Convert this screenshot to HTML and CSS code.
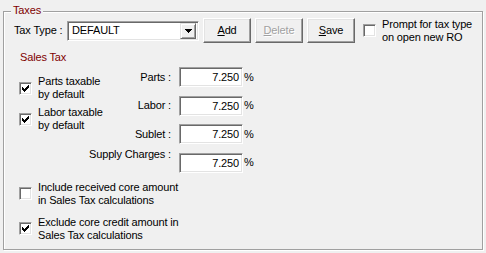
FILE: index.html
```html
<!DOCTYPE html>
<html>
<head>
<meta charset="utf-8">
<link rel="stylesheet" href="styles.css">
</head>
<body>
<fieldset class="group">
  <legend class="group-title">Taxes</legend>
  <div class="top-row">
    <span class="type-label">Tax Type :</span>
    <div class="combo">
      <span class="combo-text">DEFAULT</span>
      <span class="combo-btn"><svg width="7" height="4" viewBox="0 0 7 4" shape-rendering="crispEdges"><path d="M0 0h7v1h-7zM1 1h5v1h-5zM2 2h3v1h-3zM3 3h1v1h-1z" fill="#000"/></svg></span>
    </div>
    <button class="btn btn-first"><u>A</u>dd</button>
    <button class="btn disabled"><u>D</u>elete</button>
    <button class="btn"><u>S</u>ave</button>
    <span class="check prompt-check"></span>
    <span class="prompt-label">Prompt for tax type<br>on open new RO</span>
  </div>
  <div class="section-title">Sales Tax</div>
  <div class="middle">
    <div class="left-col">
      <div class="check-item">
        <span class="check checked"><svg width="7" height="7" viewBox="0 0 7 7" shape-rendering="crispEdges"><path d="M6 0h1v1h-1zM5 1h2v1h-2zM0 2h1v1h-1zM4 2h3v1h-3zM0 3h2v1h-2zM3 3h3v1h-3zM0 4h5v1h-5zM1 5h3v1h-3zM2 6h1v1h-1z" fill="#000"/></svg></span>
        <span class="check-text">Parts taxable<br>by default</span>
      </div>
      <div class="check-item">
        <span class="check checked"><svg width="7" height="7" viewBox="0 0 7 7" shape-rendering="crispEdges"><path d="M6 0h1v1h-1zM5 1h2v1h-2zM0 2h1v1h-1zM4 2h3v1h-3zM0 3h2v1h-2zM3 3h3v1h-3zM0 4h5v1h-5zM1 5h3v1h-3zM2 6h1v1h-1z" fill="#000"/></svg></span>
        <span class="check-text">Labor taxable<br>by default</span>
      </div>
    </div>
    <div class="rates">
      <span class="rate-label">Parts :</span>
      <span class="field">7.250</span>
      <span class="pct">%</span>
      <span class="rate-label">Labor :</span>
      <span class="field">7.250</span>
      <span class="pct">%</span>
      <span class="rate-label">Sublet :</span>
      <span class="field">7.250</span>
      <span class="pct">%</span>
      <span class="rate-label supply">Supply Charges :</span>
      <span class="field">7.250</span>
      <span class="pct">%</span>
    </div>
  </div>
  <div class="bottom">
    <div class="check-item">
      <span class="check"></span>
      <span class="check-text">Include received core amount<br>in Sales Tax calculations</span>
    </div>
    <div class="check-item">
      <span class="check checked"><svg width="7" height="7" viewBox="0 0 7 7" shape-rendering="crispEdges"><path d="M6 0h1v1h-1zM5 1h2v1h-2zM0 2h1v1h-1zM4 2h3v1h-3zM0 3h2v1h-2zM3 3h3v1h-3zM0 4h5v1h-5zM1 5h3v1h-3zM2 6h1v1h-1z" fill="#000"/></svg></span>
      <span class="check-text">Exclude core credit amount in<br>Sales Tax calculations</span>
    </div>
  </div>
</fieldset>
</body>
</html>
```
FILE: styles.css
```css
html, body {
  margin: 0;
  padding: 0;
}
body {
  width: 486px;
  height: 253px;
  background: #f0f0f0;
  font-family: "Liberation Sans", Arial, sans-serif;
  font-size: 11px;
  letter-spacing: -0.15px;
  line-height: 13px;
  color: #000;
  overflow: hidden;
}
.group {
  box-sizing: border-box;
  margin: 4px 0 0 3px;
  padding: 0;
  width: 480px;
  height: 246px;
  border: 1px solid #a0a0a0;
  box-shadow: 1px 1px 0 #fff, inset 1px 1px 0 #fff;
  min-width: 0;
}
.group-title {
  margin-left: 7px;
  padding: 0 2px 2px;
  line-height: 12px;
  color: #800000;
  background: #f0f0f0;
}
.top-row {
  display: flex;
  align-items: center;
  height: 25px;
  padding-left: 10px;
}
.type-label {
  width: 53px;
  white-space: nowrap;
}
.combo {
  box-sizing: border-box;
  width: 132px;
  height: 20px;
  display: flex;
  align-items: center;
  background: #fff;
  border: 1px solid;
  border-color: #a0a0a0 #fff #fff #a0a0a0;
  box-shadow: inset 1px 1px 0 #696969, inset -1px -1px 0 #e3e3e3;
  padding: 2px;
}
.combo-text {
  flex: 1;
  padding-left: 2px;
}
.combo-btn {
  box-sizing: border-box;
  width: 16px;
  height: 16px;
  display: flex;
  align-items: center;
  justify-content: center;
  background: #f0f0f0;
  border: 1px solid;
  border-color: #e3e3e3 #696969 #696969 #e3e3e3;
  box-shadow: inset 1px 1px 0 #fff, inset -1px -1px 0 #a0a0a0;
}
.btn {
  box-sizing: border-box;
  width: 48px;
  height: 25px;
  margin: 0 0 0 4px;
  padding: 0;
  font: inherit;
  letter-spacing: inherit;
  color: #000;
  background: #f0f0f0;
  border: 1px solid;
  border-color: #fff #696969 #696969 #fff;
  box-shadow: inset -1px -1px 0 #a0a0a0, inset 1px 1px 0 #e3e3e3;
}
.btn.disabled {
  color: #a0a0a0;
  text-shadow: 1px 1px 0 #fff;
}
.btn u {
  text-decoration: underline;
}
.check {
  box-sizing: border-box;
  flex: none;
  width: 13px;
  height: 13px;
  background: #fff;
  border: 1px solid;
  border-color: #a0a0a0 #fff #fff #a0a0a0;
  box-shadow: inset 1px 1px 0 #696969, inset -1px -1px 0 #e3e3e3;
  display: flex;
  align-items: center;
  justify-content: center;
}
.prompt-check {
  margin-left: 8px;
}
.prompt-label {
  margin-left: 6px;
  line-height: 12.5px;
  white-space: nowrap;
}
.section-title {
  margin-top: 8px;
  padding-left: 16px;
  color: #800000;
}
.middle {
  display: flex;
  margin-top: 3px;
}
.left-col {
  box-sizing: border-box;
  width: 84px;
  padding: 8px 0 0 15px;
  display: flex;
  flex-direction: column;
  gap: 5px;
}
.check-item {
  display: flex;
  align-items: center;
}
.check-text {
  margin-left: 6px;
  white-space: nowrap;
}
.rates {
  display: grid;
  grid-template-columns: 91px 64px auto;
  grid-auto-rows: 20px;
  row-gap: 8.5px;
  column-gap: 0;
  align-items: center;
}
.rate-label {
  justify-self: end;
  white-space: nowrap;
  margin-right: 8px;
}
.rate-label.supply {
  align-self: start;
  margin-top: -5px;
}
.field {
  box-sizing: border-box;
  height: 20px;
  background: #fff;
  border: 1px solid;
  border-color: #a0a0a0 #fff #fff #a0a0a0;
  box-shadow: inset 1px 1px 0 #696969, inset -1px -1px 0 #e3e3e3;
  text-align: right;
  padding: 2px 3px 0 2px;
  line-height: 14px;
}
.pct {
  margin-left: 1px;
}
.bottom {
  margin-top: 8px;
  padding-left: 15px;
  display: flex;
  flex-direction: column;
  gap: 9px;
}
```
